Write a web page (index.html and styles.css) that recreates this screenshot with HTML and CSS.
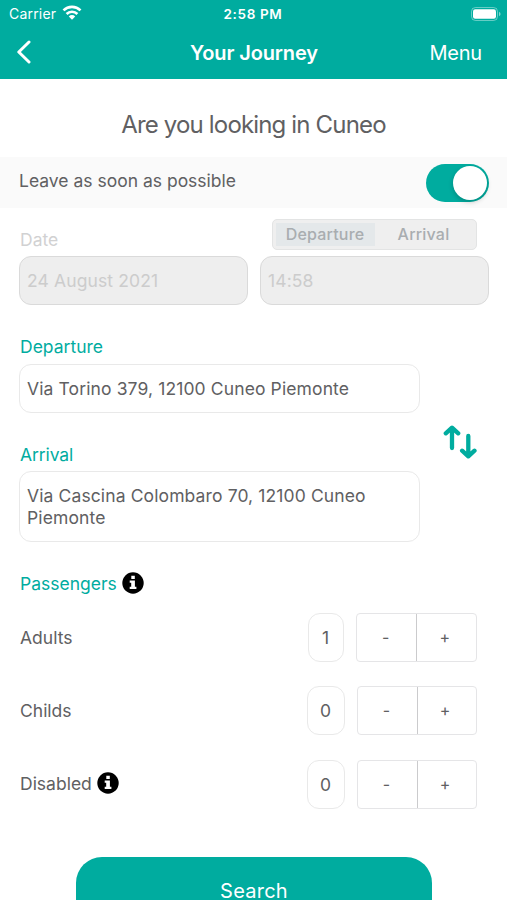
FILE: index.html
```html
<!DOCTYPE html>
<html lang="en">
<head>
<meta charset="utf-8">
<title>Your Journey</title>
<link rel="stylesheet" href="styles.css">
</head>
<body>
<div class="app">
  <header class="header">
    <div class="status">
      <div class="carrier"><span>Carrier</span>
        <svg width="20" height="15" viewBox="0 0 20 15" fill="none" stroke="#fff" stroke-width="2.7"><path d="M1.5 5.4a12.2 12.2 0 0 1 17 0M4.6 9a7.6 7.6 0 0 1 10.8 0"/><path d="M6.8 11.4a4.6 4.6 0 0 1 6.4 0L10 14.8z" fill="#fff" stroke="none"/></svg>
      </div>
      <span class="clock">2:58 PM</span>
      <svg class="battery" width="30" height="14" viewBox="0 0 30 14"><rect x=".5" y=".5" width="26" height="13" rx="4" fill="none" stroke="#fff" stroke-opacity=".4"/><rect x="2" y="2.3" width="23" height="9.4" rx="2.2" fill="#fff"/><path d="M28 4.8q1.6.7 1.6 2.2T28 9.2z" fill="#fff" fill-opacity=".5"/></svg>
    </div>
    <nav class="nav">
      <svg class="back" width="16" height="24" viewBox="0 0 16 24" fill="none" stroke="#fff" stroke-width="3" stroke-linecap="round" stroke-linejoin="round"><path d="M13 2 2.8 12 13 22"/></svg>
      <h1>Your Journey</h1>
      <a class="menu">Menu</a>
    </nav>
  </header>
  <h2 class="heading">Are you looking in Cuneo</h2>
  <div class="asap">
    <span class="asap-label">Leave as soon as possible</span>
    <span class="switch"><span class="knob"></span></span>
  </div>
  <main class="form">
    <section class="when">
      <div class="when-top">
        <span class="date-label">Date</span>
        <div class="segment"><span class="seg on">Departure</span><span class="seg arr">Arrival</span></div>
      </div>
      <div class="when-fields"><div class="field off">24 August 2021</div><div class="field off time">14:58</div></div>
    </section>
    <section class="route">
      <div class="places">
        <span class="label dep">Departure</span>
        <div class="field place">Via Torino 379, 12100 Cuneo Piemonte</div>
        <span class="label arrival">Arrival</span>
        <div class="field place tall">Via Cascina Colombaro 70, 12100 Cuneo Piemonte</div>
      </div>
      <svg class="swap" width="34" height="34" viewBox="0 0 34 34" fill="none" stroke="#00ac9f" stroke-width="4.3" stroke-linecap="round" stroke-linejoin="round"><path d="M9 23V3.5M2.8 8.3 9 2.7l6.2 5.6M25.3 11v19.5M19.1 25.7l6.2 5.6 6.2-5.6"/></svg>
    </section>
    <section class="passengers">
      <div class="pass-head"><span class="label">Passengers</span>
        <svg class="info" width="22" height="22" viewBox="0 0 22 22"><circle cx="11" cy="11" r="10.7"/><path d="M9.3 3.7h3.5v3.4H9.3zM7.7 8.5h5.2v6.3h1.5V17H7.7v-2.2h1.5v-4.1H7.7z" fill="#fff"/></svg>
      </div>
      <div class="row"><span class="name">Adults</span><span class="count one">1</span><div class="stepper one"><span>-</span><span>+</span></div></div>
      <div class="row"><span class="name">Childs</span><span class="count">0</span><div class="stepper"><span>-</span><span>+</span></div></div>
      <div class="row"><span class="name disabled">Disabled
        <svg class="info" width="22" height="22" viewBox="0 0 22 22"><circle cx="11" cy="11" r="10.7"/><path d="M9.3 3.7h3.5v3.4H9.3zM7.7 8.5h5.2v6.3h1.5V17H7.7v-2.2h1.5v-4.1H7.7z" fill="#fff"/></svg></span><span class="count">0</span><div class="stepper"><span>-</span><span>+</span></div></div>
    </section>
    <div class="search">Search</div>
  </main>
</div>
</body>
</html>
```
FILE: styles.css
```css
* { box-sizing: border-box; }
body { margin: 0; background: #fff; }
.app {
  width: 507px; height: 900px; overflow: hidden;
  font: 400 17.5px/22px Inter, "Liberation Sans", sans-serif;
  color: #606062;
}
svg { display: block; flex: none; }
.header { height: 79px; background: #00ac9f; color: #fff; }
.status {
  height: 28px; padding: 0 6px 0 9px;
  display: grid; grid-template-columns: 1fr auto 1fr; align-items: center;
  font-size: 14px; line-height: 28px;
}
.carrier { display: flex; align-items: center; gap: 6px; letter-spacing: .2px; }
.carrier svg { margin-top: -4px; }
.clock { font-weight: 600; font-size: 13.5px; letter-spacing: .65px; margin: 0 2px 0 -2px; }
.battery { justify-self: end; margin-top: -1px; }
.nav {
  height: 51px; padding: 0 25px 3px 16px;
  display: grid; grid-template-columns: 60px 1fr 60px; align-items: center;
}
.nav h1 { margin: 0 0 0 10px; text-align: center; font-size: 20px; font-weight: 600; letter-spacing: -.12px; line-height: 24px; padding-top: 1px; }
.menu { justify-self: end; font-size: 20px; letter-spacing: -.2px; padding-top: 1px; }
.heading {
  margin: 0; height: 78px; padding-top: 14px; text-align: center;
  font-size: 24px; font-weight: 400; line-height: 64px; letter-spacing: -.84px;
}
.asap {
  height: 51px; padding: 0 18px 0 19px; background: #fafafa;
  display: flex; align-items: center; justify-content: space-between;
}
.asap-label { padding-bottom: 3px; }
.switch {
  width: 63px; height: 38px; border-radius: 19px; background: #00ac9f;
  padding: 2px; display: flex; justify-content: flex-end;
}
.knob { width: 34px; height: 34px; border-radius: 50%; background: #fff; box-shadow: 0 2px 5px #0003; }
.form { padding: 0 18px 0 19px; }
.when { padding-top: 11px; }
.when-top { display: flex; justify-content: space-between; height: 31px; padding-right: 12px; }
.date-label { color: #d1d1d2; padding: 10px 0 0 1px; }
.segment {
  width: 205px; height: 31px; padding: 3px; border: 1px solid #e3e4e4; border-radius: 5px;
  background: #efefef; display: flex; color: #a9adb0;
  font-size: 16px; font-weight: 500; line-height: 23px; text-align: center; letter-spacing: .2px;
}
.seg { flex: 1; }
.seg.on { flex: 0 0 99px; background: #e4e8ea; padding-right: 1px; }
.arr { padding-right: 1px; }
.when-fields { display: grid; grid-template-columns: 1fr 1fr; gap: 12px; margin-top: 6px; }
.field { border: 1.5px solid #e9e9e9; border-radius: 12px; padding: 13px 7px 0; height: 49px; letter-spacing: .12px; }
.off { background: #eee; border-color: #dadada; color: #ccc; }
.route { display: flex; margin-top: 31px; }
.places { width: 401px; display: flex; flex-direction: column; }
.label { color: #00ac9f; padding-left: 1px; }
.dep { margin-bottom: 6px; }
.arrival { margin: 31px 0 5px; letter-spacing: -.1px; }
.place { padding-right: 30px; }
.tall { height: 71px; }
.swap { margin: 89px 0 0 23px; }
.passengers { margin-top: 30px; }
.pass-head { display: flex; align-items: center; gap: 5px; height: 22px; margin-bottom: 19px; }
.pass-head .label { padding-top: 2px; }
.row { display: flex; align-items: center; height: 49px; margin-bottom: 24.3px; padding-right: 12.5px; }
.name { flex: 1; padding-left: 1px; }
.disabled { display: flex; align-items: center; gap: 5px; }
.disabled svg { margin-top: -2px; }
.count {
  width: 38px; height: 49px; border: 1.5px solid #e9e9e9; border-radius: 12px;
  margin-right: 12px; text-align: center; line-height: 47px;
}
.count.one { width: 36px; }
.stepper {
  width: 120px; height: 49px; border: 1.5px solid #e5e5e7; border-radius: 4px;
  display: grid; grid-template-columns: 1fr 1fr; text-align: center; line-height: 47px; font-size: 16px;
}
.stepper.one { width: 121px; }
.stepper span { padding-right: 1px; }
.stepper span + span { border-left: 1.5px solid #cbcbcd; padding-right: 3px; }
.search {
  margin: 48px 0 0 57px; width: 356px; height: 70px; border-radius: 26px;
  background: #00ac9f; color: #fff; text-align: center; font-size: 20px; line-height: 69px; letter-spacing: .25px;
}
```
